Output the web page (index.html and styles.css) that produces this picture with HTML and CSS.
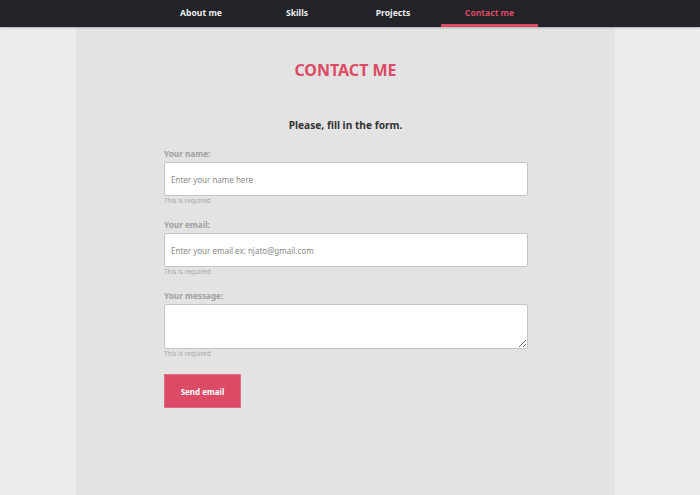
FILE: index.html
```html
<!DOCTYPE html>
<html>
<head>
<meta charset="utf-8">
<link rel="stylesheet" href="styles.css">
</head>
<body>
<header class="navbar">
  <nav class="nav">
    <a class="nav-item">About me</a>
    <a class="nav-item">Skills</a>
    <a class="nav-item">Projects</a>
    <a class="nav-item active">Contact me</a>
  </nav>
</header>
<main class="panel">
  <h1 class="title">CONTACT ME</h1>
  <p class="subtitle">Please, fill in the form.</p>
  <form class="form">
    <div class="field">
      <label class="label">Your name:</label>
      <input class="input" type="text" placeholder="Enter your name here">
      <span class="hint">This is required</span>
    </div>
    <div class="field">
      <label class="label">Your email:</label>
      <input class="input" type="text" placeholder="Enter your email ex: njato@gmail.com">
      <span class="hint">This is required</span>
    </div>
    <div class="field">
      <label class="label">Your message:</label>
      <textarea class="input textarea"></textarea>
      <span class="hint">This is required</span>
    </div>
    <button class="btn" type="button">Send email</button>
  </form>
</main>
</body>
</html>
```

FILE: styles.css
```css
* { box-sizing: border-box; }
html, body { height: 100%; }
body {
  margin: 0;
  background: #ececec;
  font-family: "Noto Sans", "Open Sans", sans-serif;
  display: flex;
  flex-direction: column;
}
.navbar {
  height: 27px;
  background: #212328;
  box-shadow: 0 1px 2px rgba(0,0,0,0.25);
  position: relative;
  z-index: 1;
  flex-shrink: 0;
}
.nav {
  width: 539px;
  margin-left: 76px;
  display: flex;
  justify-content: center;
  height: 100%;
}
.nav-item {
  width: 96px;
  text-align: center;
  color: #f0f0f0;
  font-size: 8.6px;
  font-weight: 700;
  line-height: 27px;
  height: 27px;
  border-bottom: 3px solid transparent;
}
.nav-item.active {
  color: #dc4a66;
  border-bottom-color: #dc4a66;
  width: 97px;
}
.panel {
  width: 539px;
  margin-left: 76px;
  background: #e3e3e3;
  flex: 1;
  padding: 0 88px;
}
.title {
  margin: 31px 0 0;
  text-align: center;
  color: #dc4a66;
  font-size: 16px;
  font-weight: 700;
  line-height: 24px;
}
.subtitle {
  margin: 35px 0 0;
  text-align: center;
  color: #333;
  font-size: 10.2px;
  font-weight: 700;
  line-height: 16px;
}
.form {
  margin-top: 15px;
  display: flex;
  flex-direction: column;
}
.field {
  display: flex;
  flex-direction: column;
  margin-bottom: 13px;
}
.label {
  color: #a0a0a0;
  font-size: 8.2px;
  font-weight: 700;
  line-height: 12px;
  margin-bottom: 2px;
}
.input {
  width: 364px;
  height: 34px;
  border: 1px solid #c4c4c4;
  border-radius: 2px;
  background: #fff;
  padding: 0 6px;
  font-family: inherit;
  font-size: 8px;
  color: #555;
  outline: none;
}
.input::placeholder { color: #8a8a8a; }
.textarea {
  height: 45px;
  resize: vertical;
}
.hint {
  color: #a8a8a8;
  font-size: 6.5px;
  line-height: 10px;
}
.btn {
  width: 77px;
  height: 34px;
  margin-top: 2px;
  background: #dc4a66;
  border: 1px solid #e36a82;
  color: #fff;
  font-family: inherit;
  font-size: 8px;
  font-weight: 700;
  padding: 0;
}
```
